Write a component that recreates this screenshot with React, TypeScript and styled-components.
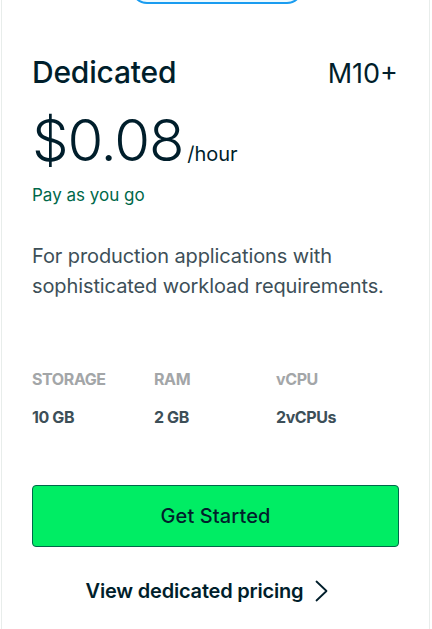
import React from "react";
import styled, { createGlobalStyle } from "styled-components";

const Global = createGlobalStyle`
  html, body { margin: 0; padding: 0; background: #ffffff; }
  body { font-family: Inter, "Noto Sans", sans-serif; color: #001e2b; overflow: hidden; }
  * { box-sizing: border-box; }
`;

const Page = styled.div`
  width: 432px;
  height: 629px;
  overflow: hidden;
`;

const Card = styled.div`
  position: relative;
  margin: -20px 0 0 1px;
  width: 429px;
  border: 1px solid #e8edeb;
  background: #ffffff;
  padding: 73px 30px 40px 30px;
  display: flex;
  flex-direction: column;
`;

const Badge = styled.div`
  position: absolute;
  top: -9px;
  left: 129px;
  width: 172px;
  height: 32px;
  border: 2px solid #1a9cf0;
  border-radius: 16px;
  background: #eefaff;
`;

const Header = styled.div`
  display: flex;
  justify-content: space-between;
  align-items: baseline;
  line-height: 36px;
`;

const Title = styled.h2`
  margin: 0;
  font-size: 30px;
  font-weight: 500;
  letter-spacing: -0.2px;
  color: #001e2b;
`;

const Tier = styled.span`
  font-size: 27px;
  font-weight: 400;
  color: #001e2b;
  margin-right: 1px;
`;

const PriceRow = styled.div`
  margin-top: 16px;
  display: flex;
  align-items: baseline;
  height: 64px;
`;

const Price = styled.span`
  font-size: 58px;
  line-height: 64px;
  font-weight: 300;
  letter-spacing: -1.2px;
  color: #001e2b;
`;

const Unit = styled.span`
  font-size: 20px;
  line-height: 1;
  font-weight: 400;
  margin-left: 4px;
  color: #001e2b;
`;

const Billing = styled.div`
  margin-top: 11px;
  font-size: 17px;
  line-height: 24px;
  color: #00684a;
`;

const Description = styled.p`
  margin: 34px 0 0 0;
  font-size: 20px;
  line-height: 30px;
  color: #3d4f58;
  letter-spacing: -0.1px;
`;

const Specs = styled.div`
  margin-top: 68px;
  display: grid;
  grid-template-columns: 122px 122px 1fr;
  row-gap: 18px;
`;

const SpecLabel = styled.div<{ $raw?: boolean }>`
  font-size: 16px;
  line-height: 20px;
  font-weight: 700;
  letter-spacing: -0.4px;
  color: #a3a6a8;
  text-transform: ${(p) => (p.$raw ? "none" : "uppercase")};
`;

const SpecValue = styled.div`
  font-size: 16px;
  line-height: 20px;
  font-weight: 700;
  letter-spacing: -0.4px;
  color: #3d4f58;
`;

const CTA = styled.button`
  margin-top: 58px;
  height: 62px;
  width: 100%;
  border: 1px solid #00684a;
  border-radius: 4px;
  background: #00ed64;
  font-family: inherit;
  font-size: 20px;
  font-weight: 500;
  letter-spacing: 0.1px;
  color: #001e2b;
  cursor: pointer;
`;

const Link = styled.a`
  margin-top: 32px;
  margin-right: 17px;
  align-self: center;
  display: flex;
  align-items: center;
  gap: 12px;
  font-size: 20px;
  line-height: 24px;
  font-weight: 600;
  letter-spacing: -0.2px;
  color: #001e2b;
  text-decoration: none;
`;

const specs = [
  { label: "Storage", value: "10 GB" },
  { label: "RAM", value: "2 GB" },
  { label: "vCPU", value: "2vCPUs", raw: true },
];

export default function App() {
  return (
    <Page>
      <Global />
      <Card>
        <Badge />
        <Header>
          <Title>Dedicated</Title>
          <Tier>M10+</Tier>
        </Header>
        <PriceRow>
          <Price>$0.08</Price>
          <Unit>/hour</Unit>
        </PriceRow>
        <Billing>Pay as you go</Billing>
        <Description>
          For production applications with sophisticated workload requirements.
        </Description>
        <Specs>
          {specs.map((s) => (
            <SpecLabel key={s.label} $raw={s.raw}>
              {s.label}
            </SpecLabel>
          ))}
          {specs.map((s) => (
            <SpecValue key={s.value}>{s.value}</SpecValue>
          ))}
        </Specs>
        <CTA>Get Started</CTA>
        <Link href="#">
          View dedicated pricing
          <svg width="13" height="22" viewBox="0 0 13 22" fill="none">
            <polyline points="1.5,1.5 11.5,11 1.5,20.5" stroke="#001e2b" strokeWidth="1.8" strokeLinecap="round" strokeLinejoin="round" />
          </svg>
        </Link>
      </Card>
    </Page>
  );
}
